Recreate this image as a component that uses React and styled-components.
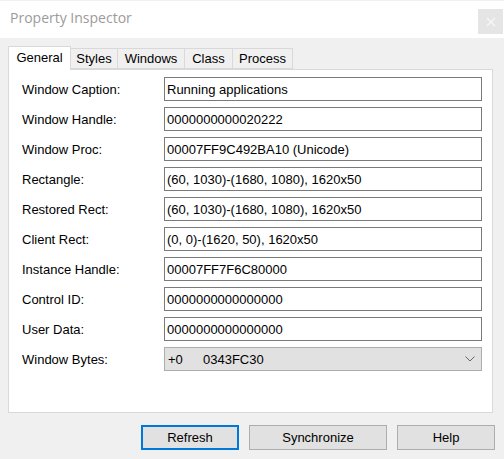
import { Fragment } from 'react'
import styled, { createGlobalStyle } from 'styled-components'

const GlobalStyle = createGlobalStyle`
    html, body {
        margin: 0;
        padding: 0;
        background: #f0f0f0;
    }
    * {
        box-sizing: border-box;
    }
`;

const Window = styled.div`
    width: 504px;
    height: 459px;
    display: flex;
    flex-direction: column;
    background: #f0f0f0;
    font-family: "Liberation Sans", Arial, sans-serif;
    font-size: 13px;
    color: #000;
    overflow: hidden;
`;

const TitleBar = styled.div`
    height: 38px;
    border-top: 1px solid #f0f0f0;
    background: #fff;
    display: flex;
    align-items: flex-start;
    justify-content: space-between;
    padding: 0 1px 0 10px;
`;

const Caption = styled.div`
    font-family: "Open Sans", "Noto Sans", sans-serif;
    font-size: 14px;
    color: #9b9b9b;
    line-height: 37px;
    margin-top: -2px;
`;

const CloseButton = styled.div`
    width: 25px;
    height: 25px;
    margin-top: 8px;
    background: #e5e5e5;
    display: flex;
    align-items: center;
    justify-content: center;
`;

const Body = styled.div`
    flex: 1;
    display: flex;
    flex-direction: column;
    padding: 8px 9px 0 8px;
`;

const TabStrip = styled.div`
    display: flex;
    align-items: flex-end;
    height: 23px;
    position: relative;
    z-index: 1;
`;

const Tab = styled.div`
    width: ${p => p.$w}px;
    height: ${p => (p.$active ? 24 : 21)}px;
    margin-bottom: ${p => (p.$active ? -1 : 0)}px;
    margin-left: -1px;
    background: ${p => (p.$active ? '#fff' : '#f0f0f0')};
    border: 1px solid #d9d9d9;
    border-bottom: ${p => (p.$active ? 'none' : '1px solid #d9d9d9')};
    display: flex;
    align-items: center;
    justify-content: center;
    padding-bottom: ${p => (p.$active ? 3 : 0)}px;
    &:first-child {
        margin-left: 0;
    }
`;

const Panel = styled.div`
    height: 344px;
    margin-right: 2px;
    background: #fff;
    border: 1px solid #d9d9d9;
    padding: 7px 10px 0 13px;
    display: grid;
    grid-template-columns: 142px 1fr;
    grid-auto-rows: 24px;
    row-gap: 6px;
    align-content: start;
`;

const Label = styled.div`
    display: flex;
    align-items: center;
`;

const Field = styled.div`
    border: 1px solid #7a7a7a;
    display: flex;
    align-items: center;
    padding-left: 2px;
    white-space: nowrap;
`;

const Combo = styled.div`
    border: 1px solid #adadad;
    background: #e1e1e1;
    display: flex;
    align-items: center;
    padding: 0 6px 0 3px;
`;

const ComboCell = styled.span`
    width: ${p => p.$w}px;
`;

const ComboValue = styled.span`
    flex: 1;
`;

const ButtonRow = styled.div`
    display: flex;
    justify-content: flex-end;
    gap: 10px;
    margin-top: 12px;
`;

const Button = styled.div`
    width: ${p => p.$w}px;
    height: 25px;
    background: #e1e1e1;
    border: ${p => (p.$default ? '2px solid #0078d7' : '1px solid #adadad')};
    display: flex;
    align-items: center;
    justify-content: center;
`;

const rows = [
    ['Window Caption:', 'Running applications'],
    ['Window Handle:', '0000000000020222'],
    ['Window Proc:', '00007FF9C492BA10 (Unicode)'],
    ['Rectangle:', '(60, 1030)-(1680, 1080), 1620x50'],
    ['Restored Rect:', '(60, 1030)-(1680, 1080), 1620x50'],
    ['Client Rect:', '(0, 0)-(1620, 50), 1620x50'],
    ['Instance Handle:', '00007FF7F6C80000'],
    ['Control ID:', '0000000000000000'],
    ['User Data:', '0000000000000000'],
]

const tabs = [
    ['General', 63],
    ['Styles', 48],
    ['Windows', 68],
    ['Class', 49],
    ['Process', 61],
]

const App = () => {
  return (
    <Window>
        <GlobalStyle />
        <TitleBar>
            <Caption>Property Inspector</Caption>
            <CloseButton>
                <svg width="10" height="10" viewBox="0 0 10 10">
                    <path d="M1 1L9 9M9 1L1 9" stroke="#f7f7f7" strokeWidth="1.2" fill="none" />
                </svg>
            </CloseButton>
        </TitleBar>
        <Body>
            <TabStrip>
                {tabs.map(([t, w], i) => (
                    <Tab key={t} $w={w} $active={i === 0}>{t}</Tab>
                ))}
            </TabStrip>
            <Panel>
                {rows.map(([l, v]) => (
                    <Fragment key={l}>
                        <Label>{l}</Label>
                        <Field>{v}</Field>
                    </Fragment>
                ))}
                <Label>Window Bytes:</Label>
                <Combo>
                    <ComboCell $w={35}>+0</ComboCell>
                    <ComboValue>0343FC30</ComboValue>
                    <svg width="10" height="6" viewBox="0 0 10 6">
                        <path d="M0.5 0.5L5 5L9.5 0.5" stroke="#666" strokeWidth="1" fill="none" />
                    </svg>
                </Combo>
            </Panel>
            <ButtonRow>
                <Button $w={98} $default>Refresh</Button>
                <Button $w={138}>Synchronize</Button>
                <Button $w={98}>Help</Button>
            </ButtonRow>
        </Body>
    </Window>
  )
}

export default App
